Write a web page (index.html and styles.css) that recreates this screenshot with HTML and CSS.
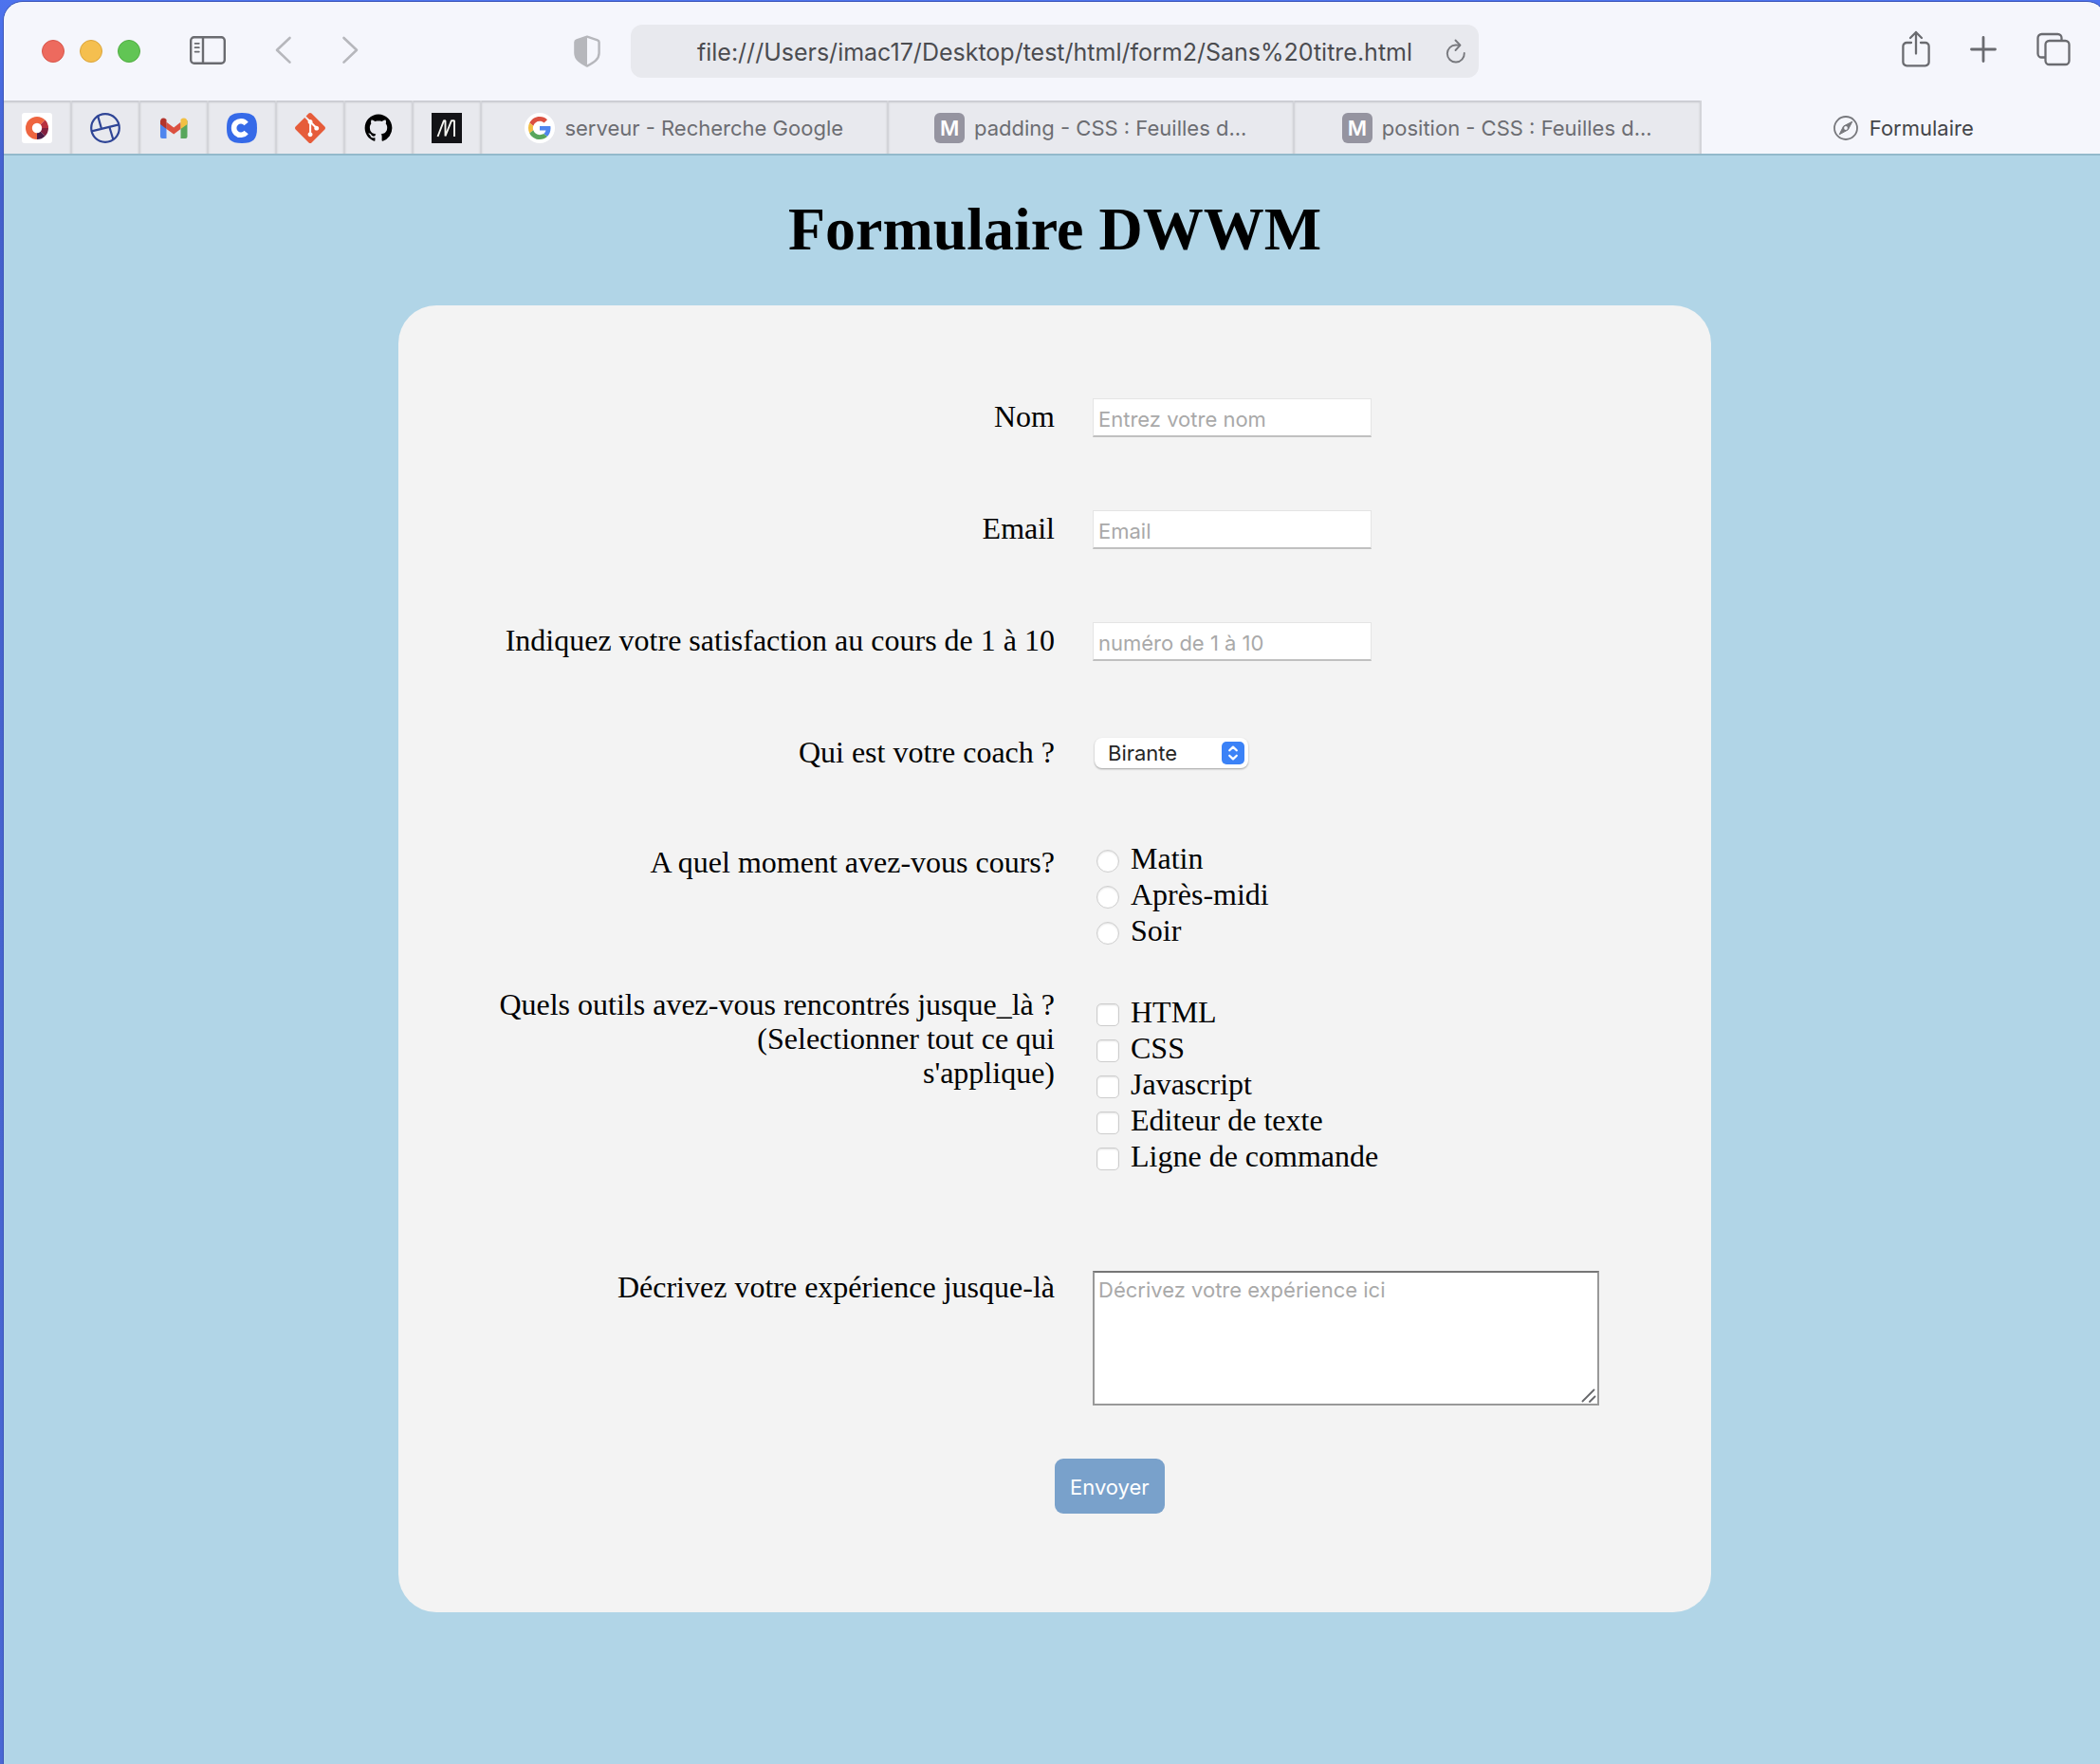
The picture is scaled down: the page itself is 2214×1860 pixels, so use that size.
FILE: index.html
```html
<!DOCTYPE html>
<html lang="fr">
<head>
<meta charset="utf-8">
<title>Formulaire</title>
<link rel="stylesheet" href="styles.css">
</head>
<body>
<div class="window">
  <header class="toolbar">
    <div class="toolbar-left">
      <div class="lights">
        <button class="light light-close" type="button" aria-label="Fermer"></button>
        <button class="light light-min" type="button" aria-label="Réduire"></button>
        <button class="light light-max" type="button" aria-label="Agrandir"></button>
      </div>
      <button class="tool tool-sidebar" type="button" aria-label="Barre latérale">
        <svg width="38" height="30" viewBox="0 0 38 30" fill="none" stroke="#6a6b70" stroke-width="2.4" stroke-linecap="round"><rect x="1.2" y="1.2" width="35.6" height="27.6" rx="3.5"/><path d="M14 1.5v27"/><path d="M5.6 7.8h4.2M5.6 12.2h4.2M5.6 16.6h4.2" stroke-width="1.8"/></svg>
      </button>
      <button class="tool tool-back" type="button" aria-label="Précédent">
        <svg width="18" height="30" viewBox="0 0 18 30" fill="none" stroke="#b6b7bc" stroke-width="2.6" stroke-linecap="round" stroke-linejoin="round"><path d="M15.5 2L2 14.8l13.5 12.8"/></svg>
      </button>
      <button class="tool tool-forward" type="button" aria-label="Suivant">
        <svg width="18" height="30" viewBox="0 0 18 30" fill="none" stroke="#b6b7bc" stroke-width="2.6" stroke-linecap="round" stroke-linejoin="round"><path d="M2.500 2L16 14.800 2.500 27.600"/></svg>
      </button>
      <button class="tool tool-shield" type="button" aria-label="Confidentialité">
        <svg width="28" height="34" viewBox="0 0 28 34"><path d="M14 1.600L25 5.400q1.600.6 1.600 2.200V19c0 6.500-5.600 10-12.600 13.600C7 29 1.400 25.500 1.400 19V7.600q0-1.600 1.600-2.200z" fill="none" stroke="#b6b7bc" stroke-width="2.400" stroke-linejoin="round"/><path d="M14 1.600v31C7 29 1.400 25.500 1.400 19V7.600q0-1.600 1.600-2.200z" fill="#b6b7bc"/></svg>
      </button>
    </div>
    <div class="address">
      <input class="address-input" type="text" aria-label="Adresse" value="file:///Users/imac17/Desktop/test/html/form2/Sans%20titre.html">
      <button class="tool address-reload" type="button" aria-label="Recharger">
        <svg width="24" height="28" viewBox="0 0 24 28" fill="none" stroke="#77787d" stroke-width="1.900" stroke-linecap="round" stroke-linejoin="round"><path d="M20.800 16A9 9 0 1 1 12 7.500q2 0 4 .2"/><path d="M11.500 2.500L16.500 7.700l-5 5.300"/></svg>
      </button>
    </div>
    <div class="toolbar-right">
      <button class="tool" type="button" aria-label="Partager">
        <svg width="30" height="40" viewBox="0 0 30 40" fill="none" stroke="#6a6b70" stroke-width="2.300" stroke-linecap="round" stroke-linejoin="round"><path d="M10 13H5.200A3.800 3.800 0 0 0 1.400 16.800V33.500a3.800 3.800 0 0 0 3.800 3.800H24.800a3.800 3.800 0 0 0 3.800-3.800V16.800A3.800 3.800 0 0 0 24.800 13H20"/><path d="M15 24.500V2M9 8l6-6 6 6"/></svg>
      </button>
      <button class="tool" type="button" aria-label="Nouvel onglet">
        <svg width="28" height="28" viewBox="0 0 28 28" fill="none" stroke="#6a6b70" stroke-width="2.800" stroke-linecap="round"><path d="M14 1.500v25M1.500 14h25"/></svg>
      </button>
      <button class="tool" type="button" aria-label="Aperçu des onglets">
        <svg width="36" height="36" viewBox="0 0 36 36" fill="none" stroke="#6a6b70" stroke-width="2.300"><rect x="9.500" y="9" width="25" height="25" rx="4"/><path d="M9 26.500H5.500a4 4 0 0 1-4-4V6a4 4 0 0 1 4-4H22.500a4 4 0 0 1 4 4V9"/></svg>
      </button>
    </div>
  </header>

  <nav class="tabs" aria-label="Onglets">
    <a class="tab tab-pinned" href="#" aria-label="Odoo">
      <svg class="favicon" viewBox="0 0 32 32"><rect width="32" height="32" rx="3" fill="#fff"/><path d="M16 4a12 12 0 1 0 0 24z" fill="#ee6540"/><path d="M16 4a12 12 0 0 1 8.500 3.500L16 16z" fill="#ee6540"/><path d="M24.500 7.500A12 12 0 0 1 28 16H16z" fill="#b8303f"/><path d="M28 16a12 12 0 0 1-3.500 8.500L16 16z" fill="#82203f"/><path d="M24.500 24.500A12 12 0 0 1 16 28V16z" fill="#4a1a45"/><circle cx="16" cy="16" r="5.200" fill="#fff"/></svg>
    </a>
    <a class="tab tab-pinned" href="#" aria-label="Globe">
      <svg class="favicon" viewBox="0 0 32 32" fill="none" stroke="#2f4596" stroke-width="2.200"><circle cx="16" cy="16" r="14.800"/><path d="M1.600 19.400L30.400 12.400M8.200 3.400L12 16.900M20.300 14.800L24.400 28.200"/></svg>
    </a>
    <a class="tab tab-pinned" href="#" aria-label="Gmail">
      <svg class="favicon" viewBox="0 0 32 32"><path d="M2 8v17a2 2 0 0 0 2 2h4.500V12z" fill="#5086ee"/><path d="M23.500 12v15H28.500a2 2 0 0 0 2-2V8z" fill="#58a65c"/><path d="M8.500 9.800L16.200 15.500l7.300-5.700v7.200L16.200 22.600 8.500 17z" fill="#db5040"/><path d="M2 9.500C2 5.500 5.500 4.400 8.500 7v10L2 12z" fill="#b3342c"/><path d="M30.500 9.500c0-4-4-5.100-7-2.500v10l7-5z" fill="#f2c043"/></svg>
    </a>
    <a class="tab tab-pinned" href="#" aria-label="Coursera">
      <svg class="favicon" viewBox="0 0 32 32"><path d="M16 0C28 0 32 4 32 16S28 32 16 32 0 28 0 16 4 0 16 0z" fill="#366ae8"/><path d="M20.600 11.400a7.300 7.300 0 1 0 0 9.200" fill="none" stroke="#fff" stroke-width="5.600"/></svg>
    </a>
    <a class="tab tab-pinned" href="#" aria-label="Git">
      <svg class="favicon" viewBox="0 0 24 24"><path d="M12 2l10 10-10 10L5 12z" fill="#fff"/><path fill="#e65c3a" d="M23.546 10.930L13.067.452c-.604-.603-1.582-.603-2.188 0L8.708 2.627l2.760 2.760c.645-.215 1.379-.070 1.889.441.516.515.658 1.258.438 1.900l2.658 2.660c.645-.223 1.387-.078 1.900.435.721.720.721 1.884 0 2.604-.719.719-1.881.719-2.600 0-.539-.541-.674-1.337-.404-1.996L12.860 8.955v6.525c.176.086.342.203.488.348.713.721.713 1.883 0 2.600-.719.721-1.889.721-2.609 0-.719-.719-.719-1.879 0-2.598.182-.180.387-.316.605-.406V8.835c-.217-.091-.424-.222-.600-.401-.545-.545-.676-1.342-.396-2.009L7.636 3.700.450 10.881c-.600.605-.600 1.584 0 2.189l10.480 10.477c.604.604 1.582.604 2.186 0l10.430-10.430c.605-.603.605-1.582 0-2.187"/></svg>
    </a>
    <a class="tab tab-pinned" href="#" aria-label="GitHub">
      <svg class="favicon" viewBox="-0.9 -0.9 17.8 17.8"><path d="M8 0C3.580 0 0 3.580 0 8c0 3.540 2.290 6.530 5.470 7.590.4.070.55-.17.55-.38 0-.19-.01-.82-.01-1.490-2.010.37-2.530-.49-2.690-.94-.09-.23-.48-.94-.82-1.130-.28-.15-.68-.52-.01-.53.63-.01 1.080.58 1.230.82.72 1.210 1.870.87 2.330.66.070-.52.280-.87.510-1.070-1.780-.2-3.640-.89-3.640-3.950 0-.87.310-1.590.82-2.150-.08-.2-.36-1.020.08-2.120 0 0 .67-.21 2.200.82.640-.18 1.320-.27 2-.27s1.360.09 2 .27c1.530-1.040 2.200-.82 2.200-.82.440 1.100.16 1.920.08 2.120.51.560.82 1.270.82 2.150 0 3.070-1.870 3.750-3.650 3.950.29.25.54.73.54 1.480 0 1.070-.01 1.930-.01 2.200 0 .21.15.46.55.38A8.010 8.010 0 0 0 16 8c0-4.420-3.580-8-8-8z" fill="#000"/></svg>
    </a>
    <a class="tab tab-pinned" href="#" aria-label="Medium">
      <svg class="favicon" viewBox="0 0 32 32"><rect width="32" height="32" fill="#131317"/><path d="M6.500 25L13 8.200h1.500v16.300L21 8.200h3V25" fill="none" stroke="#f4f4f0" stroke-width="1.900" stroke-linejoin="bevel"/></svg>
    </a>
    <a class="tab" href="#">
      <svg class="favicon" viewBox="-8 -8 64 64"><circle cx="24" cy="24" r="32" fill="#fff"/><path fill="#db5040" d="M24 9.500c3.540 0 6.710 1.220 9.210 3.600l6.850-6.850C35.900 2.380 30.470 0 24 0 14.620 0 6.510 5.380 2.560 13.220l7.980 6.190C12.430 13.720 17.740 9.500 24 9.500z"/><path fill="#5086ee" d="M46.980 24.550c0-1.570-.15-3.090-.38-4.550H24v9.020h12.940c-.58 2.960-2.260 5.480-4.780 7.180l7.730 6c4.510-4.180 7.090-10.360 7.090-17.650z"/><path fill="#f2bd42" d="M10.530 28.590c-.48-1.450-.76-2.990-.76-4.590s.27-3.140.76-4.590l-7.980-6.190C.92 16.460 0 20.120 0 24c0 3.880.92 7.540 2.560 10.780l7.970-6.190z"/><path fill="#58a65c" d="M24 48c6.480 0 11.930-2.130 15.890-5.810l-7.730-6c-2.150 1.450-4.920 2.300-8.160 2.300-6.260 0-11.570-4.220-13.470-9.910l-7.980 6.190C6.510 42.620 14.620 48 24 48z"/></svg>
      <span>serveur - Recherche Google</span>
    </a>
    <a class="tab" href="#"><span class="favicon-letter">M</span><span>padding - CSS : Feuilles d...</span></a>
    <a class="tab" href="#"><span class="favicon-letter">M</span><span>position - CSS : Feuilles d...</span></a>
    <a class="tab tab-active" href="#" aria-current="page">
      <svg class="compass" viewBox="0 0 26 26"><circle cx="13" cy="13" r="12" fill="none" stroke="#77787d" stroke-width="1.800"/><path d="M19.800 6.200L15.400 14.800 6.200 19.800 10.600 11z" fill="#77787d" stroke="#77787d" stroke-linejoin="round"/><circle cx="13" cy="13" r="1.900" fill="#f5f6fc"/></svg>
      <span>Formulaire</span>
    </a>
  </nav>

  <main class="page">
    <h1 class="title">Formulaire DWWM</h1>
    <form class="card">
      <div class="row">
        <label class="question" for="nom">Nom</label>
        <div class="answer"><input class="field" id="nom" type="text" placeholder="Entrez votre nom"></div>
      </div>
      <div class="row">
        <label class="question" for="email">Email</label>
        <div class="answer"><input class="field" id="email" type="email" placeholder="Email"></div>
      </div>
      <div class="row">
        <label class="question" for="note">Indiquez votre satisfaction au cours de 1 à 10</label>
        <div class="answer"><input class="field" id="note" type="text" inputmode="numeric" placeholder="numéro de 1 à 10"></div>
      </div>
      <div class="row">
        <label class="question" for="coach">Qui est votre coach ?</label>
        <div class="answer">
          <div class="picker">
            <select class="picker-select" id="coach"><option>Birante</option></select>
            <svg class="picker-badge" width="24" height="24" viewBox="0 0 24 24"><rect width="24" height="24" rx="5" fill="#3b82f7"/><path d="M8.200 9.300L12 5.600l3.800 3.700M8.200 14.700l3.800 3.700 3.800-3.700" fill="none" stroke="#fff" stroke-width="2.200" stroke-linecap="round" stroke-linejoin="round"/></svg>
          </div>
        </div>
      </div>
      <div class="row row-moment" role="radiogroup" aria-labelledby="q-moment">
        <div class="question" id="q-moment">A quel moment avez-vous cours?</div>
        <div class="answer">
          <label class="option"><input class="mark mark-radio" type="radio" name="moment">Matin</label>
          <label class="option"><input class="mark mark-radio" type="radio" name="moment">Après-midi</label>
          <label class="option"><input class="mark mark-radio" type="radio" name="moment">Soir</label>
        </div>
      </div>
      <div class="row row-tools" role="group" aria-labelledby="q-outils">
        <div class="question" id="q-outils">Quels outils avez-vous rencontrés jusque_là ?<br>(Selectionner tout ce qui<br>s'applique)</div>
        <div class="answer">
          <label class="option"><input class="mark" type="checkbox">HTML</label>
          <label class="option"><input class="mark" type="checkbox">CSS</label>
          <label class="option"><input class="mark" type="checkbox">Javascript</label>
          <label class="option"><input class="mark" type="checkbox">Editeur de texte</label>
          <label class="option"><input class="mark" type="checkbox">Ligne de commande</label>
        </div>
      </div>
      <div class="row row-story">
        <label class="question" for="experience">Décrivez votre expérience jusque-là</label>
        <div class="answer">
          <div class="story">
            <textarea class="story-text" id="experience" placeholder="Décrivez votre expérience ici"></textarea>
            <svg class="story-grip" width="16" height="16" viewBox="0 0 16 16" stroke="#66676a" stroke-width="1.800" stroke-linecap="round"><path d="M1.500 14.500L13.500 2.500M9 15L14.500 9.500"/></svg>
          </div>
        </div>
      </div>
      <div class="row">
        <button class="submit" type="submit">Envoyer</button>
      </div>
    </form>
  </main>
</div>
</body>
</html>
```
FILE: styles.css
```css
* {
  box-sizing: border-box;
}

body {
  margin: 0;
  overflow: hidden;
  background: linear-gradient(#4d73ee, #4460cc 200px, #4a68d4);
  font-family: Inter, "Liberation Sans", sans-serif;
}

/* the browser window runs slightly past the right edge of the desktop */
.window {
  display: flex;
  flex-direction: column;
  min-height: calc(100vh - 2px);
  margin: 2px -6px 0 4px;
  border-radius: 20px 20px 0 0;
  overflow: hidden;
  background: #b1d5e7;
  box-shadow: 0 0 0 1px #3c55b8;
}

/* toolbar */
.toolbar {
  display: grid;
  grid-template-columns: 1fr minmax(0, 894px) 1fr;
  align-items: center;
  height: 104px;
  background: #f5f6fc;
}

.toolbar-left,
.toolbar-right {
  display: flex;
  align-items: center;
}

.toolbar-left {
  padding: 0 32px 0 40px;
}

.toolbar-right {
  justify-content: flex-end;
  gap: 42px;
  padding: 0 37px 4px 0;
}

.lights {
  display: flex;
  gap: 16px;
}

.light {
  width: 24px;
  height: 24px;
  padding: 0;
  border: 1px solid;
  border-radius: 50%;
}

.light-close {
  background: #ed6a5e;
  border-color: #d8564b;
}

.light-min {
  background: #f5bf4f;
  border-color: #dba43a;
}

.light-max {
  background: #61c554;
  border-color: #50ad42;
}

.tool {
  display: flex;
  padding: 0;
  border: 0;
  background: none;
}

.tool-sidebar,
.tool-back,
.tool-forward {
  margin-left: 52px;
  padding-bottom: 2px;
}

.tool-shield {
  margin-left: auto;
}

.address {
  display: flex;
  align-items: center;
  height: 56px;
  padding: 0 12px 0 36px;
  border-radius: 12px;
  background: #e8e9ee;
}

.address-input {
  flex: 1;
  min-width: 0;
  height: 56px;
  padding: 2px 0 0;
  border: 0;
  background: none;
  color: #4b4c50;
  font: 25px Inter, "Liberation Sans", sans-serif;
  text-align: center;
}

/* tabs */
.tabs {
  display: flex;
  height: 58px;
  border-bottom: 2px solid #93b9cb;
  background: #f5f6fc;
}

.tab {
  display: flex;
  flex: 1;
  align-items: center;
  justify-content: center;
  gap: 10px;
  min-width: 0;
  padding-top: 2px;
  border-right: 2px solid #d3d4d9;
  background: #e8e9ee;
  box-shadow: inset 0 2px 2px #c8c9cf;
  color: #6c6d72;
  font-size: 22px;
  text-decoration: none;
  white-space: nowrap;
}

.tab-pinned {
  flex: 0 0 72px;
}

.tab-active {
  gap: 12px;
  border-right: 0;
  background: none;
  box-shadow: none;
  color: #444549;
}

.favicon,
.favicon-letter {
  flex: none;
  width: 32px;
  height: 32px;
}

.favicon-letter {
  border-radius: 6px;
  background: #9594a0;
  color: #fff;
  font-size: 22px;
  font-weight: 600;
  line-height: 32px;
  text-align: center;
}

.compass {
  flex: none;
  width: 26px;
  height: 26px;
}

/* page */
.page {
  flex: 1;
  padding: 41px 0 160px;
  color: #000;
  font-family: "Liberation Serif", "Times New Roman", serif;
  font-size: 32px;
  line-height: 36px;
}

.title {
  margin: 0 0 43px;
  font-size: 64px;
  line-height: 74px;
  text-align: center;
}

.card {
  width: 62.5%;
  max-width: 1384px;
  margin: 0 auto;
  padding: 98px 0 104px;
  border-radius: 40px;
  background: #f3f3f3;
}

.row {
  display: grid;
  grid-template-columns: 1fr 1fr;
  align-items: start;
  min-height: 42px;
  margin-bottom: 76px;
}

.row:last-child {
  margin-bottom: 0;
}

.question {
  padding-top: 1px;
  text-align: right;
  white-space: nowrap;
}

.answer {
  padding-left: 40px;
}

.row-moment {
  margin-top: -6px;
  margin-bottom: 40px;
}

.row-moment .question {
  padding-top: 5px;
}

.row-tools {
  margin-bottom: 100px;
}

.row-tools .answer {
  padding-top: 8px;
}

.row-story {
  margin-bottom: 56px;
}

.row-story .answer {
  padding-top: 2px;
}

.field {
  display: block;
  width: 294px;
  height: 41px;
  padding: 3px 5px 0;
  border: 1px solid #e4e4e4;
  border-bottom: 2px solid #c0c0c0;
  background: #fff;
  font: 22px Inter, "Liberation Sans", sans-serif;
}

.field::placeholder,
.story-text::placeholder {
  color: #a9a9a9;
  opacity: 1;
}

.picker {
  position: relative;
  width: 166px;
  padding: 4px 2px 6px;
}

.picker-select {
  display: block;
  width: 162px;
  height: 32px;
  padding: 0 14px;
  border: 0;
  border-radius: 8px;
  appearance: none;
  background: #fff;
  box-shadow: 0 1px 2px rgba(0, 0, 0, 0.35);
  color: #262626;
  font: 22px Inter, "Liberation Sans", sans-serif;
}

.picker-badge {
  position: absolute;
  top: 8px;
  right: 6px;
  pointer-events: none;
}

.option {
  display: flex;
  align-items: center;
  gap: 12px;
  height: 38px;
  padding-left: 4px;
}

.mark {
  width: 24px;
  height: 24px;
  margin: 6px 0 0;
  border: 1px solid #cdcdcd;
  border-radius: 5px;
  appearance: none;
  background: #fff;
  box-shadow: inset 0 1px 2px rgba(0, 0, 0, 0.12);
}

.mark-radio {
  border-radius: 50%;
}

.mark:checked {
  background: #3b82f7;
}

.story {
  position: relative;
  width: 534px;
}

.story-text {
  display: block;
  width: 100%;
  height: 142px;
  padding: 4px;
  border: 2px solid #999;
  border-top-color: #767676;
  resize: none;
  font: 22px/28px Inter, "Liberation Sans", sans-serif;
}

.story-grip {
  position: absolute;
  right: 3px;
  bottom: 3px;
  pointer-events: none;
}

.submit {
  grid-column: 2;
  justify-self: start;
  height: 58px;
  padding: 1px 16px 0;
  border: 0;
  border-radius: 9px;
  background: #79a1cb;
  color: #fff;
  font: 22px Inter, "Liberation Sans", sans-serif;
}
```
